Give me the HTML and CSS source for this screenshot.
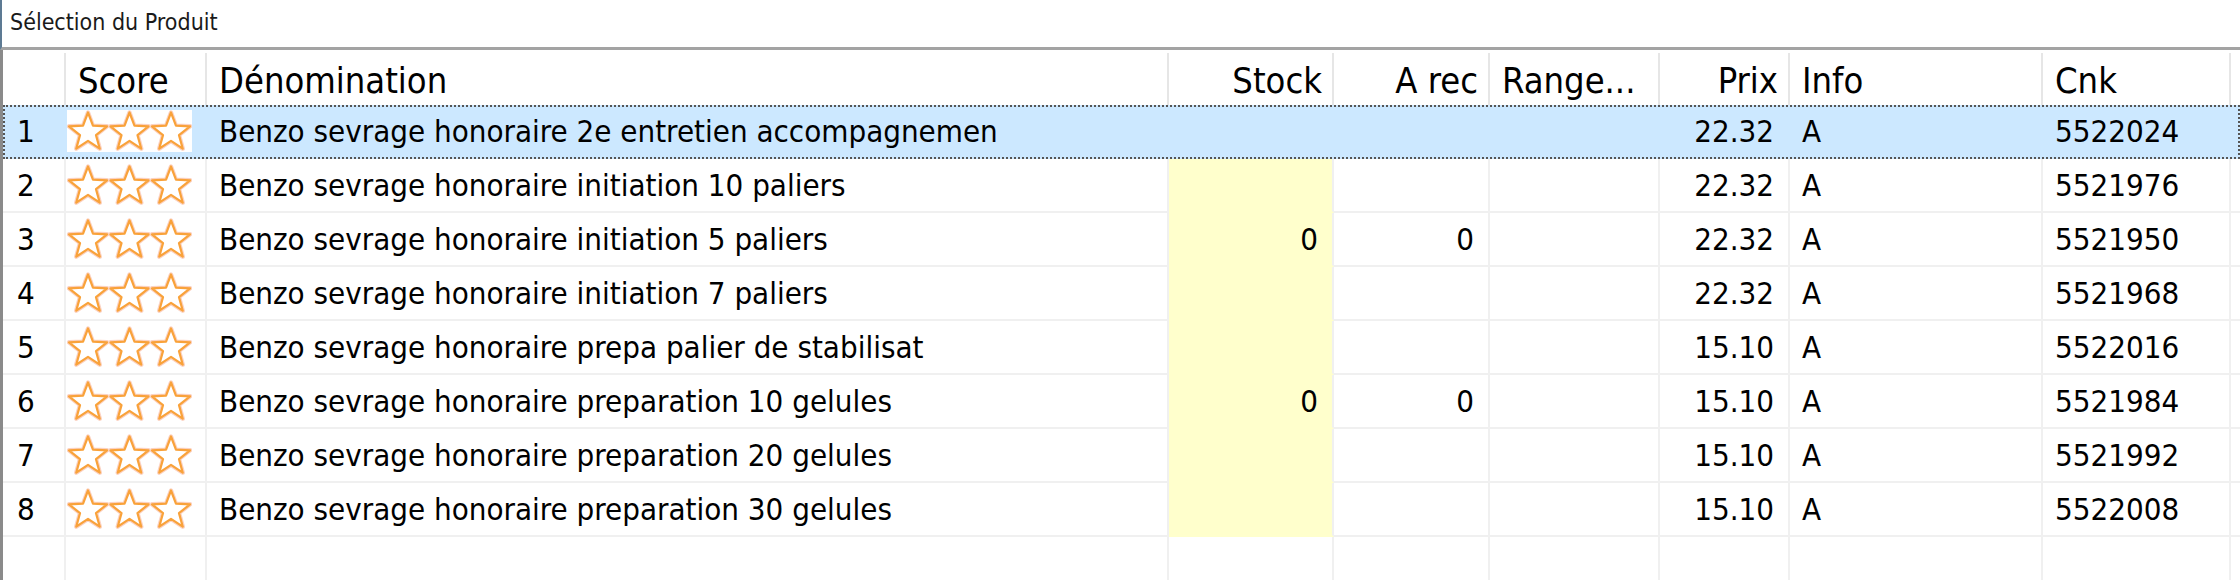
FILE: index.html
```html
<!DOCTYPE html>
<html lang="fr">

<head>
    <meta charset="UTF-8">
    <title>Sélection du Produit</title>
    <link rel="stylesheet" href="styles.css">
</head>

<body>
    <svg class="defs" width="0" height="0">
        <defs>
            <polygon id="star" points="0,-20 4.94,-6.8 19.02,-6.18 7.99,2.6 11.76,16.18 0,8.4 -11.76,16.18 -7.99,2.6 -19.02,-6.18 -4.94,-6.8"></polygon>
            <symbol id="stars" viewBox="0 0 125 42">
                <rect width="125" height="42" fill="#fff"></rect>
                <g fill="#fff" stroke="#fbd2c2" stroke-width="4.4" stroke-linejoin="round">
                    <use href="#star" x="21" y="22.5"></use>
                    <use href="#star" x="62.5" y="22.5"></use>
                    <use href="#star" x="104" y="22.5"></use>
                </g>
                <g fill="#fff" stroke="#f9a23a" stroke-width="2.2" stroke-linejoin="round">
                    <use href="#star" x="21" y="22.5"></use>
                    <use href="#star" x="62.5" y="22.5"></use>
                    <use href="#star" x="104" y="22.5"></use>
                </g>
            </symbol>
        </defs>
    </svg>

    <div class="title">Sélection du Produit</div>

    <div class="grid">
        <div class="row head">
            <div class="cell"></div>
            <div class="cell">Score</div>
            <div class="cell">Dénomination</div>
            <div class="cell num">Stock</div>
            <div class="cell num">A rec</div>
            <div class="cell">Range...</div>
            <div class="cell num">Prix</div>
            <div class="cell">Info</div>
            <div class="cell">Cnk</div>
            <div class="cell fill"></div>
        </div>

        <div class="row sel">
            <div class="cell idx">1</div>
            <div class="cell score"><svg width="125" height="42"><use href="#stars"></use></svg></div>
            <div class="cell">Benzo sevrage honoraire 2e entretien accompagnemen</div>
            <div class="cell num stock"></div>
            <div class="cell num"></div>
            <div class="cell"></div>
            <div class="cell num">22.32</div>
            <div class="cell">A</div>
            <div class="cell">5522024</div>
            <div class="cell fill"></div>
        </div>

        <div class="row">
            <div class="cell idx">2</div>
            <div class="cell score"><svg width="125" height="42"><use href="#stars"></use></svg></div>
            <div class="cell">Benzo sevrage honoraire initiation 10 paliers</div>
            <div class="cell num stock"></div>
            <div class="cell num"></div>
            <div class="cell"></div>
            <div class="cell num">22.32</div>
            <div class="cell">A</div>
            <div class="cell">5521976</div>
            <div class="cell fill"></div>
        </div>

        <div class="row">
            <div class="cell idx">3</div>
            <div class="cell score"><svg width="125" height="42"><use href="#stars"></use></svg></div>
            <div class="cell">Benzo sevrage honoraire initiation 5 paliers</div>
            <div class="cell num stock">0</div>
            <div class="cell num">0</div>
            <div class="cell"></div>
            <div class="cell num">22.32</div>
            <div class="cell">A</div>
            <div class="cell">5521950</div>
            <div class="cell fill"></div>
        </div>

        <div class="row">
            <div class="cell idx">4</div>
            <div class="cell score"><svg width="125" height="42"><use href="#stars"></use></svg></div>
            <div class="cell">Benzo sevrage honoraire initiation 7 paliers</div>
            <div class="cell num stock"></div>
            <div class="cell num"></div>
            <div class="cell"></div>
            <div class="cell num">22.32</div>
            <div class="cell">A</div>
            <div class="cell">5521968</div>
            <div class="cell fill"></div>
        </div>

        <div class="row">
            <div class="cell idx">5</div>
            <div class="cell score"><svg width="125" height="42"><use href="#stars"></use></svg></div>
            <div class="cell">Benzo sevrage honoraire prepa palier de stabilisat</div>
            <div class="cell num stock"></div>
            <div class="cell num"></div>
            <div class="cell"></div>
            <div class="cell num">15.10</div>
            <div class="cell">A</div>
            <div class="cell">5522016</div>
            <div class="cell fill"></div>
        </div>

        <div class="row">
            <div class="cell idx">6</div>
            <div class="cell score"><svg width="125" height="42"><use href="#stars"></use></svg></div>
            <div class="cell">Benzo sevrage honoraire preparation 10 gelules</div>
            <div class="cell num stock">0</div>
            <div class="cell num">0</div>
            <div class="cell"></div>
            <div class="cell num">15.10</div>
            <div class="cell">A</div>
            <div class="cell">5521984</div>
            <div class="cell fill"></div>
        </div>

        <div class="row">
            <div class="cell idx">7</div>
            <div class="cell score"><svg width="125" height="42"><use href="#stars"></use></svg></div>
            <div class="cell">Benzo sevrage honoraire preparation 20 gelules</div>
            <div class="cell num stock"></div>
            <div class="cell num"></div>
            <div class="cell"></div>
            <div class="cell num">15.10</div>
            <div class="cell">A</div>
            <div class="cell">5521992</div>
            <div class="cell fill"></div>
        </div>

        <div class="row">
            <div class="cell idx">8</div>
            <div class="cell score"><svg width="125" height="42"><use href="#stars"></use></svg></div>
            <div class="cell">Benzo sevrage honoraire preparation 30 gelules</div>
            <div class="cell num stock"></div>
            <div class="cell num"></div>
            <div class="cell"></div>
            <div class="cell num">15.10</div>
            <div class="cell">A</div>
            <div class="cell">5522008</div>
            <div class="cell fill"></div>
        </div>

        <div class="row rest">
            <div class="cell"></div>
            <div class="cell"></div>
            <div class="cell"></div>
            <div class="cell"></div>
            <div class="cell"></div>
            <div class="cell"></div>
            <div class="cell"></div>
            <div class="cell"></div>
            <div class="cell"></div>
            <div class="cell fill"></div>
        </div>
    </div>
</body>

</html>
```

FILE: styles.css
```css
* {
    box-sizing: border-box;
}

body {
    margin: 0;
    height: 580px;
    overflow: hidden;
    background: #fff;
    color: #000;
    font-family: "DejaVu Sans Condensed", "DejaVu Sans", sans-serif;
    font-stretch: condensed;
}

.defs {
    position: absolute;
}

.title {
    height: 50px;
    padding-left: 8px;
    font-size: 23px;
    line-height: 44px;
    color: #1a1a1a;
    border-left: 2px solid #5d7a93;
    border-bottom: 3px solid #a3a3a3;
}

.grid {
    height: 530px;
    display: flex;
    flex-direction: column;
    border-left: 3px solid #8a8a8a;
}

.row {
    display: grid;
    grid-template-columns: 63px 141px 962px 165px 156px 170px 130px 253px 188px 1fr;
    height: 54px;
    flex: none;
}

.head {
    height: 55px;
    padding-top: 3px;
}

.rest {
    flex: 1;
}

.cell {
    display: flex;
    align-items: center;
    padding: 0 12px;
    font-size: 31px;
    white-space: nowrap;
    overflow: hidden;
    border-right: 2px solid #f0f0f0;
    border-bottom: 2px solid #f0f0f0;
}

.head .cell {
    padding-top: 2px;
    font-size: 36px;
    border-bottom: none;
    border-right-color: #e6e6e6;
}

.rest .cell {
    border-bottom: none;
}

.cell.fill {
    border-right: none;
}

.num {
    justify-content: flex-end;
    padding-right: 14px;
}

.head .num {
    padding-right: 10px;
}

.idx {
    padding-left: 14px;
}

.score {
    padding: 0 0 0 1px;
}

.score svg {
    display: block;
}

.stock {
    background: #ffffcc;
    border-bottom-color: #ffffcc;
}

.sel {
    background: #cce8ff;
    outline: 2px dotted #555;
    outline-offset: -2px;
}

.sel .cell {
    background: transparent;
    border-color: transparent;
}
```
